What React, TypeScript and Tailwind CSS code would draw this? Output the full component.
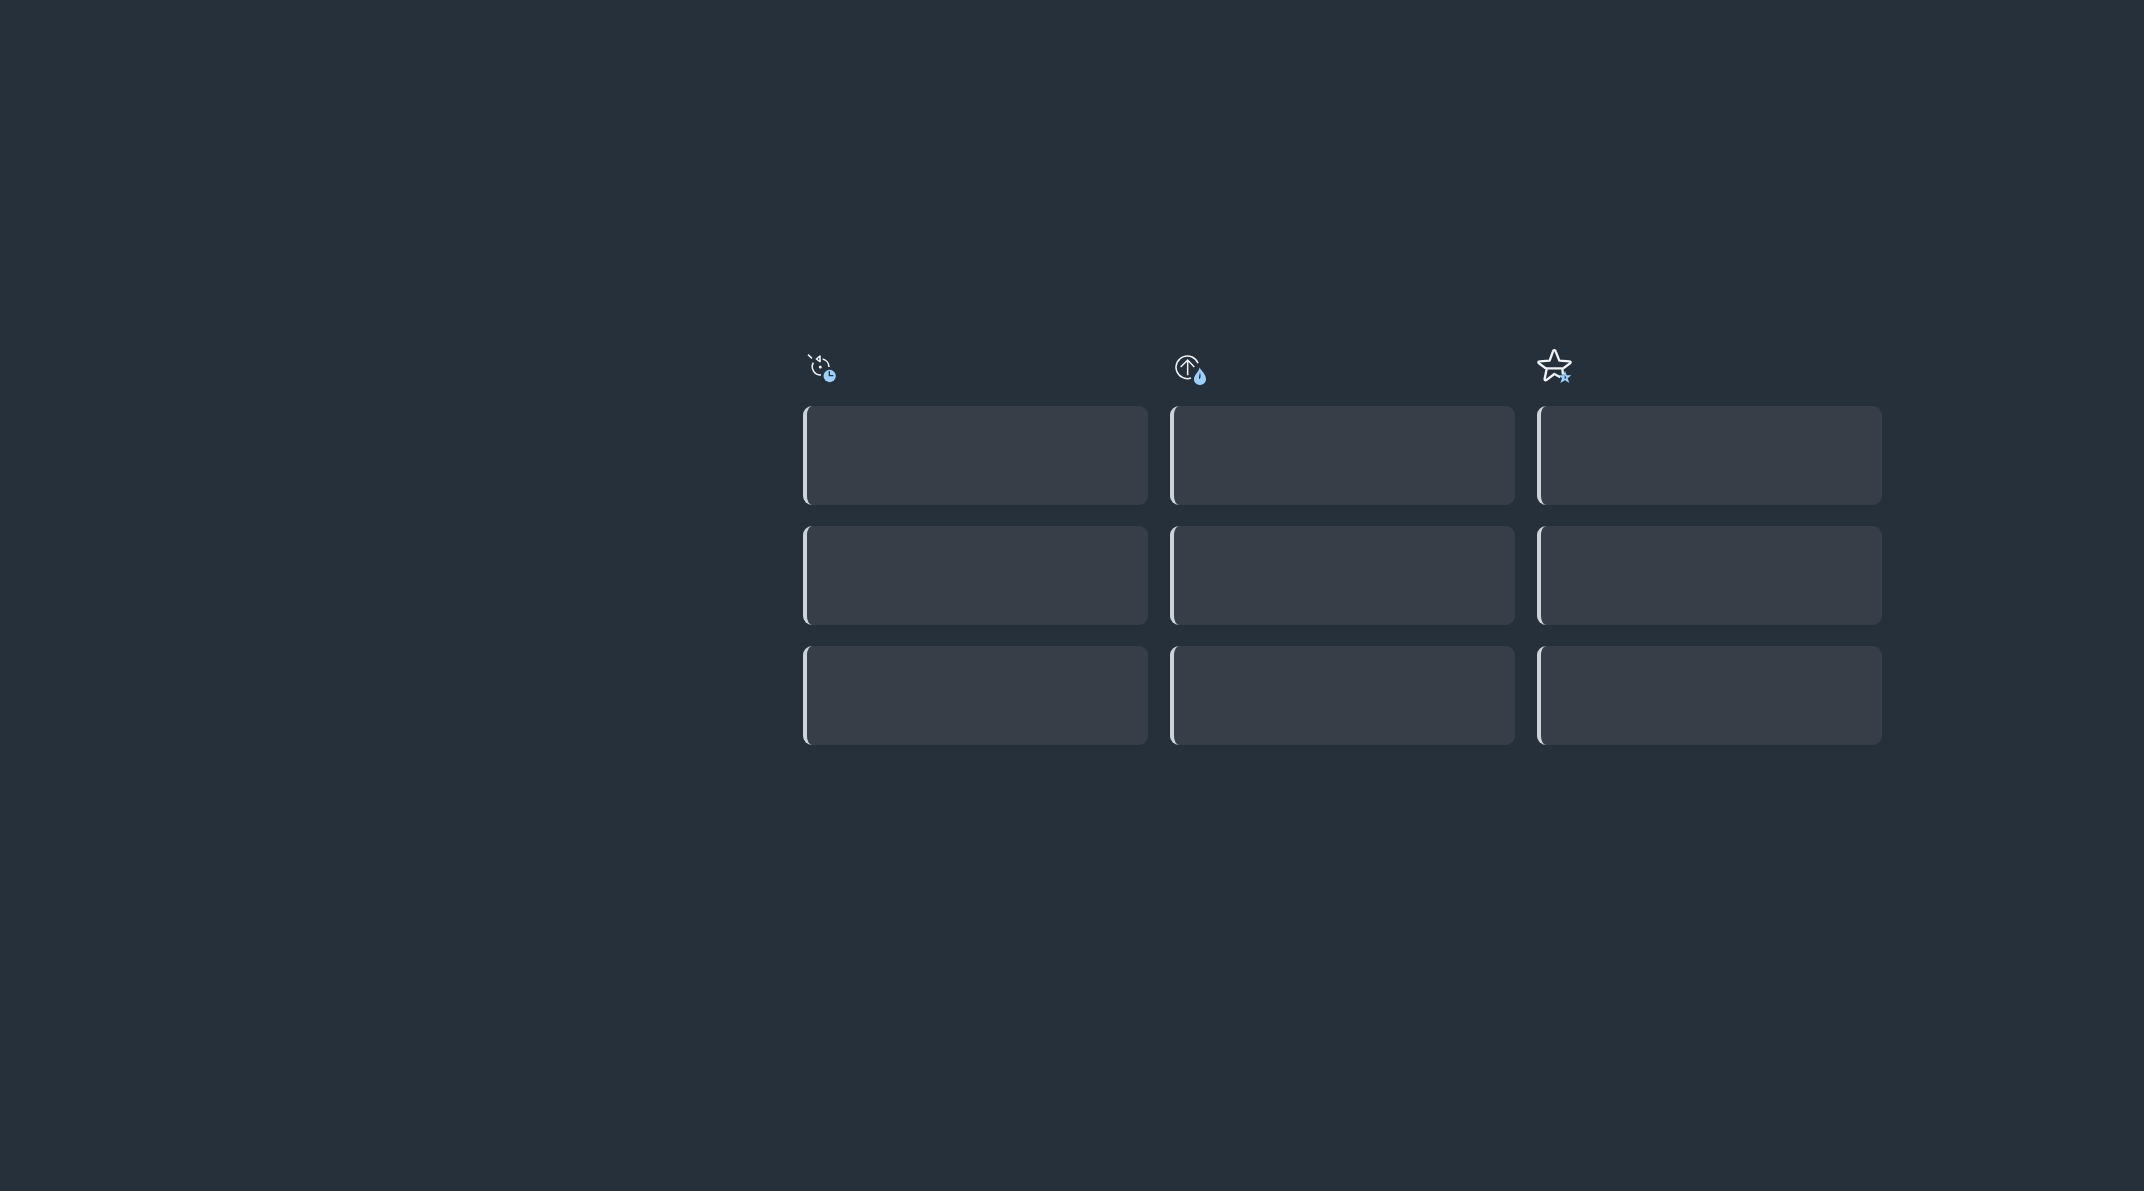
import type { ReactNode } from 'react';

const INK = '#f0f3f6';
const ACCENT = '#9dcfff';
const BACKGROUND = '#26303a';

function RecentIcon() {
  return (
    <svg className="size-10" viewBox="21 24 120 120" fill="none" aria-hidden="true">
      <path
        d="M36 44L48 55M52 68A25 25 0 0 0 75 105M80 57A25 25 0 0 1 99 81"
        stroke={INK}
        strokeWidth="4.5"
      />
      <path d="M72 48V65L61 57Z" stroke={INK} strokeWidth="4.5" strokeLinejoin="round" />
      <circle cx="73" cy="81" r="4.5" fill={INK} />
      <circle cx="101" cy="108" r="18.5" fill={ACCENT} />
      <path d="M100 94V107H112" stroke={BACKGROUND} strokeWidth="4" />
    </svg>
  );
}

function PopularIcon() {
  return (
    <svg className="size-10" viewBox="18 24 120 120" fill="none" aria-hidden="true">
      <path
        d="M102 70A34 34 0 1 0 81 114M71 106V60M50 81L71 60L91 81"
        stroke={INK}
        strokeWidth="4.5"
      />
      <path
        d="M107 82C111 94 126 101 126 118C126 128 118 135 108 135C98 135 90 128 90 118C90 105 104 97 107 82Z"
        fill={ACCENT}
      />
      <path d="M108 96C109 103 111 108 109 114L106 118C103 112 107 104 108 96Z" fill={BACKGROUND} />
    </svg>
  );
}

function FavoriteIcon() {
  return (
    <svg className="size-10" viewBox="21 24 120 120" fill="none" aria-hidden="true">
      <path
        d="M91 112L73 102L51 119C46 123 43 121 44 116L50 87L27 70C24 67 25 64 29 64L59 62L69 34C70 29 76 29 77 34L88 62L118 64C122 64 123 67 120 70L97 87L99 104M50 85H97"
        stroke={INK}
        strokeWidth="7"
        strokeLinejoin="round"
      />
      <path
        d="M105 92L110 106H124L113 115L118 129L105 121L91 129L96 115L86 106H100Z"
        fill={ACCENT}
      />
      <path d="M104 105L109 113L104 118Z" fill={BACKGROUND} />
    </svg>
  );
}

function Column({ label, icon }: { label: string; icon: ReactNode }) {
  return (
    <section aria-label={label} className="flex flex-col gap-[18px]">
      <header>{icon}</header>
      <ul className="flex flex-col gap-[21px]">
        {[0, 1, 2].map((slot) => (
          <li key={slot} className="h-[99px] rounded-[9px] border-l-4 border-[#ced3d9] bg-[#373e47]" />
        ))}
      </ul>
    </section>
  );
}

export default function App() {
  return (
    <main className="min-h-screen bg-[#26303a] pt-[348px] pr-[262px] pl-[803px]">
      <div className="grid grid-cols-3 gap-[22px]">
        <Column label="Recent" icon={<RecentIcon />} />
        <Column label="Popular" icon={<PopularIcon />} />
        <Column label="Favorites" icon={<FavoriteIcon />} />
      </div>
    </main>
  );
}
